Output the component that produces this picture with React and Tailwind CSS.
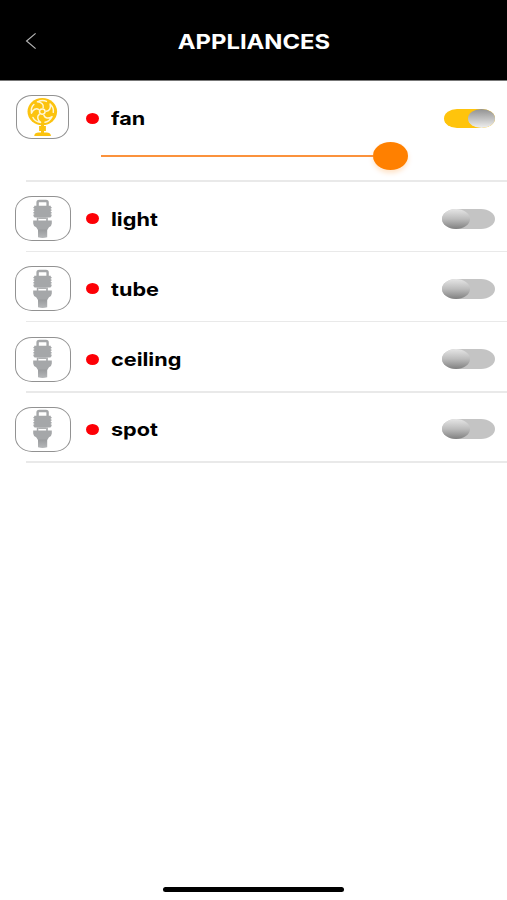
function FanIcon() {
  return (
    <svg className="shrink-0" width="32" height="42" viewBox="0 0 32 42" fill="none">
      <ellipse cx="15.3" cy="15.6" rx="14.8" ry="13.6" fill="#fcc30f" />
      <g stroke="#fff6d6" strokeWidth="1.5" strokeLinecap="round" strokeLinejoin="round">
        <ellipse cx="15.3" cy="15.6" rx="2.8" ry="2.6" />
        {[0, 72, 144, 216, 288].map((a) => (
          <path
            key={a}
            transform={`rotate(${a} 15.3 15.6)`}
            d="M16.2 11.6C17 8.6 14.6 6.2 10.4 5.8C13.6 4.2 17 4 19.4 5.4"
          />
        ))}
      </g>
      <path d="M12.1 30h6.8v5h-6.8z" fill="#fcc30f" />
      <path d="M14 28.5h3v9h-3z" fill="#fcc30f" />
      <path d="M7.2 40c.3-2.4 2.1-3.4 4.3-3.4h8.2c2.2 0 4 1 4.3 3.4z" fill="#fcc30f" />
    </svg>
  );
}

function LampIcon() {
  return (
    <svg className="shrink-0" width="22" height="40" viewBox="0 0 22 40" fill="none">
      <defs>
        <linearGradient id="stem" x1="0" y1="0" x2="0" y2="1">
          <stop offset="0" stopColor="#989a9c" />
          <stop offset="1" stopColor="#b6b8ba" />
        </linearGradient>
      </defs>
      <path d="M5.6 7.5V3.6Q5.6 2 7.2 2H14Q15.6 2 15.6 3.6V7.5" stroke="#a5a7a9" strokeWidth="2.4" />
      <path
        d="M2.2 6.8H18.8V8H19.6V9.3H18.8V10.5H19.6V11.8H18.8V13H19.6V14.4H18.8V15.6H19.6V17L18.4 18.6H2.6L1.4 17V15.6H2.2V14.4H1.4V13H2.2V11.8H1.4V10.5H2.2V9.3H1.4V8H2.2Z"
        fill="#a5a7a9"
      />
      <path d="M4.8 18.4h1.5v3.5H4.8zM14.2 18.4h1.6v3.5h-1.6z" fill="#a5a7a9" />
      <path d="M6.3 18.4h7.9v1.5H6.3z" fill="#a5a7a9" />
      <path d="M1.2 21.5H19.8V24.4Q19.8 26.8 17 28.2L15.2 31H6L4.2 28.2Q1.2 26.8 1.2 24.4Z" fill="#a5a7a9" />
      <path d="M6 30.4H15.2V38.2Q10.6 39.8 6 38.2Z" fill="url(#stem)" />
    </svg>
  );
}

function Label({ children }) {
  return (
    <span className="block origin-left scale-x-[1.17] text-[18.5px] leading-6 font-bold text-black">
      {children}
    </span>
  );
}

function Toggle({ on }) {
  return on ? (
    <div className="flex h-[19px] w-[51px] items-center justify-end rounded-[13px/9.5px] bg-[#ffc40c]">
      <div className="h-[19px] w-[27px] rounded-[50%] bg-linear-to-b from-[#929292] to-[#f0f0f0]" />
    </div>
  ) : (
    <div className="flex h-5 w-[53px] items-center rounded-[14px/10px] bg-[#c4c4c4]">
      <div className="h-5 w-[28px] rounded-[50%] bg-linear-to-b from-[#e6e6e6] via-[#bcbcbc] to-[#808080]" />
    </div>
  );
}

function Dot() {
  return <div className="h-[11px] w-[13px] rounded-[50%] bg-[#fd0006]" />;
}

function Divider() {
  return <div className="ml-[26px] h-[1.5px] shrink-0 bg-[#e9e9e9]" />;
}

function Row({ name }) {
  return (
    <div className="flex h-[70.25px] flex-col">
      <div className="flex flex-1 items-center pr-[12px] pl-[15px] pt-[5px]">
        <div className="flex h-[45px] w-[56px] items-center justify-center rounded-[17px/15px] border border-[#929292] pr-[1px]">
          <LampIcon />
        </div>
        <div className="ml-[15px] w-[25px]">
          <Dot />
        </div>
        <Label>{name}</Label>
        <div className="ml-auto">
          <Toggle />
        </div>
      </div>
      <Divider />
    </div>
  );
}

export default function App() {
  return (
    <div className="flex h-[900px] w-[507px] flex-col overflow-hidden bg-white font-['Inter','Liberation_Sans',sans-serif]">
      <header className="grid h-[81px] shrink-0 grid-cols-[1fr_auto_1fr] items-center border-b border-[#777] bg-black">
        <svg className="ml-[25px] mt-[2px]" width="12" height="18" viewBox="0 0 12 18" fill="none">
          <path d="M10.6 1.4L1.6 9L10.6 16.6" stroke="#b5b5b5" strokeWidth="1.2" />
        </svg>
        <h1 className="mt-[3px] scale-x-[1.19] text-[20px] leading-6 font-bold text-white">APPLIANCES</h1>
      </header>

      <main className="flex flex-1 flex-col">
        <div className="flex h-[100.75px] flex-col">
          <div className="flex h-[60px] items-center pt-[14px] pr-[12px] pl-4">
            <div className="-mt-[2px] flex h-[44px] w-[53px] items-center justify-center rounded-[16px/14px] border border-[#929292]">
              <FanIcon />
            </div>
            <div className="ml-[17px] w-[25px]">
              <Dot />
            </div>
            <Label>fan</Label>
            <div className="ml-auto">
              <Toggle on />
            </div>
          </div>
          <div className="ml-[101px] flex h-[30px] items-center">
            <div className="h-[2px] w-[272px] bg-[#fb923c]" />
            <div className="h-[28px] w-[35px] rounded-[50%] bg-[#ff8000] shadow-[0_3px_5px_rgba(255,128,0,0.22)]" />
          </div>
          <div className="flex-1" />
          <Divider />
        </div>
        {["light", "tube", "ceiling", "spot"].map((name) => (
          <Row key={name} name={name} />
        ))}
      </main>

      <div className="mx-auto mb-[8px] h-[5px] w-[181px] rounded-full bg-black" />
    </div>
  );
}
